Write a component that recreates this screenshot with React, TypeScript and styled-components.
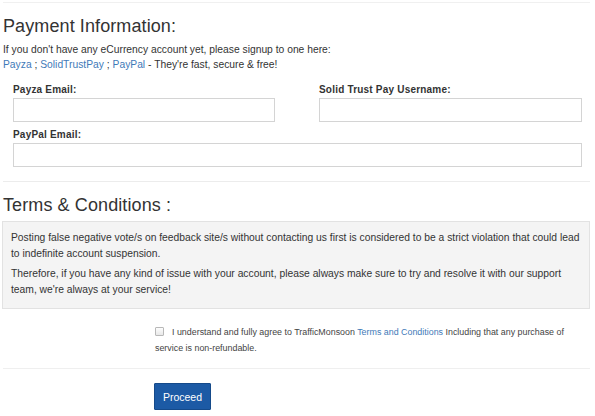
import React from "react";
import styled, { createGlobalStyle } from "styled-components";

const Global = createGlobalStyle`
  html, body { margin: 0; padding: 0; background: #fff; }
  body { font-family: "Liberation Sans", Arial, sans-serif; color: #333; }
  * { box-sizing: border-box; }
`;

const Page = styled.div`
  width: 595px;
  padding: 2px 5px 0 3px;
`;

const Section = styled.section<{ $top?: boolean }>`
  border-top: 1px solid ${(p) => (p.$top ? "#f0f0f0" : "#ececec")};
`;

const Title = styled.h2`
  margin: 12px 0 0 0;
  font-weight: 400;
  font-size: 18px;
  line-height: 22px;
  color: #333;
  letter-spacing: 0.1px;
`;

const Intro = styled.p`
  margin: 5px 0 0 0;
  font-size: 10.3px;
  line-height: 15px;
`;

const Link = styled.a`
  color: #3f7ab8;
  text-decoration: none;
`;

const Fields = styled.div`
  display: grid;
  grid-template-columns: 262px 263px;
  column-gap: 44px;
  row-gap: 6px;
  padding: 11px 0 0 10px;
`;

const Field = styled.div<{ $wide?: boolean }>`
  display: flex;
  flex-direction: column;
  grid-column: ${(p) => (p.$wide ? "1 / span 2" : "auto")};
`;

const Label = styled.label`
  font-size: 10px;
  font-weight: 700;
  line-height: 14px;
  height: 14px;
  color: #333;
  letter-spacing: 0.2px;
`;

const Input = styled.input`
  height: 24px;
  border: 1px solid #d4d4d4;
  background: #fff;
  margin-top: 1px;
`;

const Spacer = styled.div`
  height: 14px;
`;

const TermsBox = styled.div`
  margin-top: 5px;
  width: 588px;
  margin-left: -1px;
  background: #f4f4f4;
  border: 1px solid #e2e2e2;
  padding: 8px 8px 10px 8px;
  font-size: 10.3px;
  line-height: 16px;
  color: #333;
`;

const Para = styled.p`
  margin: 0 0 4px 0;
  &:last-child { margin-bottom: 0; }
`;

const Agree = styled.div`
  padding: 15px 20px 0 152px;
  font-size: 8.9px;
  line-height: 16px;
  color: #444;
  height: 59px;
`;

const Check = styled.span`
  display: inline-block;
  width: 9px;
  height: 9px;
  border: 1px solid #b8b8b8;
  border-radius: 1px;
  background: linear-gradient(#fdfdfd, #e8e8e8);
  margin-right: 8px;
  vertical-align: -1px;
`;

const Footer = styled.div`
  border-top: 1px solid #efefef;
  padding: 14px 0 0 151px;
`;

const Button = styled.button`
  width: 57px;
  height: 27px;
  background: #1c5aa5;
  border: 1px solid #154a8a;
  border-radius: 1px;
  color: #fff;
  font-family: "Liberation Sans", Arial, sans-serif;
  font-size: 10.5px;
  padding: 0;
`;

export default function App() {
  return (
    <>
      <Global />
      <Page>
        <Section $top>
          <Title>Payment Information:</Title>
          <Intro>
            If you don't have any eCurrency account yet, please signup to one here:
            <br />
            <Link>Payza</Link> ; <Link>SolidTrustPay</Link> ; <Link>PayPal</Link> - They're fast, secure &amp; free!
          </Intro>
          <Fields>
            <Field>
              <Label>Payza Email:</Label>
              <Input />
            </Field>
            <Field>
              <Label>Solid Trust Pay Username:</Label>
              <Input />
            </Field>
            <Field $wide>
              <Label>PayPal Email:</Label>
              <Input />
            </Field>
          </Fields>
          <Spacer />
        </Section>
        <Section>
          <Title>Terms &amp; Conditions :</Title>
          <TermsBox>
            <Para>
              Posting false negative vote/s on feedback site/s without contacting us first is considered to be a strict violation that could lead to indefinite account suspension.
            </Para>
            <Para>
              Therefore, if you have any kind of issue with your account, please always make sure to try and resolve it with our support team, we're always at your service!
            </Para>
          </TermsBox>
          <Agree>
            <Check />I understand and fully agree to TrafficMonsoon <Link>Terms and Conditions</Link> Including that any purchase of service is non-refundable.
          </Agree>
          <Footer>
            <Button>Proceed</Button>
          </Footer>
        </Section>
      </Page>
    </>
  );
}
